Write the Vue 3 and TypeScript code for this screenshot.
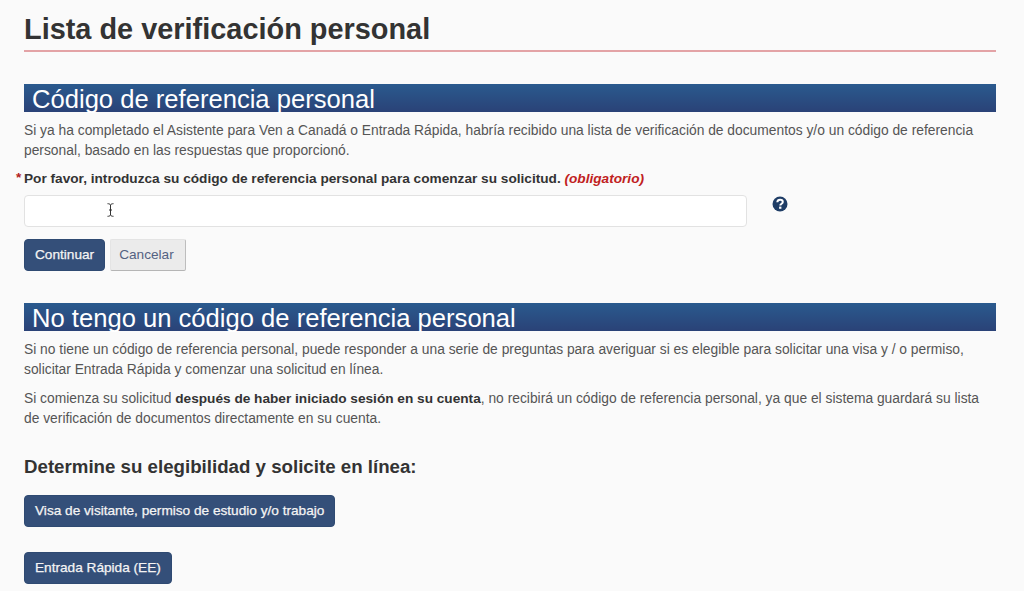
<script setup lang="ts">
const eligibilityButtons: string[] = ['Visa de visitante, permiso de estudio y/o trabajo', 'Entrada Rápida (EE)']
</script>

<template>
  <main class="page">
    <h1 class="title">Lista de verificación personal</h1>

    <section class="first">
      <h2 class="band">Código de referencia personal</h2>
      <p class="text">Si ya ha completado el Asistente para Ven a Canadá o Entrada Rápida, habría recibido una lista de verificación de documentos y/o un código de referencia personal, basado en las respuestas que proporcionó.</p>
      <label class="label" for="code"><span class="star">*</span>Por favor, introduzca su código de referencia personal para comenzar su solicitud. <em>(obligatorio)</em></label>
      <div class="field-row">
        <div class="input-wrap">
          <input id="code" class="input" type="text" />
          <svg class="cursor" width="7" height="14" viewBox="0 0 7 14" aria-hidden="true">
            <path d="M.5 .7C2 .7 3 1 3.5 2 4 1 5 .7 6.500 .7M3.500 2V12M.5 13.300C2 13.300 3 13 3.500 12 4 13 5 13.300 6.500 13.300M2 7H5" fill="none" stroke="#333" stroke-width="1" />
          </svg>
        </div>
        <svg class="help" width="16" height="16" viewBox="0 0 16 16" aria-label="Ayuda">
          <circle cx="8" cy="8" r="7.500" fill="#1f3d66" />
          <path d="M5.300 6.200C5.400 4.600 6.500 3.700 8.100 3.700 9.700 3.700 10.800 4.600 10.800 5.900 10.800 7 10.100 7.500 9.300 8 8.600 8.500 8.300 8.800 8.300 9.600" fill="none" stroke="#fff" stroke-width="2" />
          <rect x="7.100" y="10.600" width="2.300" height="2.200" fill="#fff" />
        </svg>
      </div>
      <div class="actions">
        <button class="btn primary" type="button">Continuar</button>
        <button class="btn secondary" type="button">Cancelar</button>
      </div>
    </section>

    <section class="second">
      <h2 class="band">No tengo un código de referencia personal</h2>
      <p class="text">Si no tiene un código de referencia personal, puede responder a una serie de preguntas para averiguar si es elegible para solicitar una visa y / o permiso, solicitar Entrada Rápida y comenzar una solicitud en línea.</p>
      <p class="text next">Si comienza su solicitud <strong>después de haber iniciado sesión en su cuenta</strong>, no recibirá un código de referencia personal, ya que el sistema guardará su lista de verificación de documentos directamente en su cuenta.</p>
      <h3 class="subhead">Determine su elegibilidad y solicite en línea:</h3>
      <div class="stack">
        <button v-for="label in eligibilityButtons" :key="label" class="btn primary" type="button">{{ label }}</button>
      </div>
    </section>
  </main>
</template>

<style>
html, body { margin: 0; background: #fafafa; overflow: hidden; }
</style>

<style scoped>
.page {
  box-sizing: border-box;
  width: 1024px;
  height: 591px;
  padding: 12px 28px 0 24px;
  overflow: hidden;
  background: #fafafa;
  color: #555;
  font-family: "Liberation Sans", Arial, sans-serif;
}
.title {
  margin: 0;
  padding-bottom: 4px;
  border-bottom: 2px solid #e3a3a6;
  font-size: 28.900px;
  line-height: 34px;
  font-weight: 700;
  color: #333;
}
.first { margin-top: 32px; }
.second { margin-top: 32px; }
.band {
  margin: 0;
  height: 28px;
  padding-left: 8px;
  background: linear-gradient(#2a5a8e, #2a4277);
  color: #fff;
  font-size: 25.600px;
  line-height: 30px;
  font-weight: 400;
  white-space: nowrap;
}
.text {
  margin: 8px 0 0;
  font-size: 13.820px;
  line-height: 20px;
}
.text strong { color: #333; font-size: 13.650px; line-height: 1; }
.next { margin-top: 9px; }
.label {
  position: relative;
  display: block;
  margin-top: 9px;
  font-size: 13.650px;
  line-height: 20px;
  font-weight: 700;
  color: #333;
}
.star {
  position: absolute;
  left: -8px;
  top: -1px;
  color: #b22222;
}
.label em { color: #c02020; }
.field-row {
  display: flex;
  align-items: flex-start;
  gap: 25px;
  margin-top: 6px;
}
.input-wrap { position: relative; width: 723px; height: 32px; }
.input {
  box-sizing: border-box;
  display: block;
  width: 100%;
  height: 100%;
  border: 1px solid #e2e2e2;
  border-radius: 4px;
  background: #fff;
}
.cursor { position: absolute; left: 83px; top: 8px; }
.help { margin-top: 1px; }
.actions { display: flex; gap: 5px; margin-top: 12px; }
.btn {
  box-sizing: border-box;
  height: 32px;
  padding: 0 10px;
  border-radius: 4px;
  font: 400 13.650px/30px "Liberation Sans", Arial, sans-serif;
  white-space: nowrap;
}
.primary {
  border: 1px solid #2f4a72;
  background: #344f79;
  color: #f4f4f4;
  -webkit-text-stroke: 0.25px #f4f4f4;
}
.secondary {
  border: 1px solid #e4e4e4;
  border-right-color: #bdbdbd;
  border-bottom-color: #b5b5b5;
  border-radius: 2px;
  padding: 0 11px 0 8px;
  background: #ebebeb;
  color: #546282;
}
.subhead {
  margin: 27px 0 0;
  font-size: 18.700px;
  line-height: 24px;
  font-weight: 700;
  color: #333;
}
.stack {
  display: flex;
  flex-direction: column;
  align-items: flex-start;
  gap: 25px;
  margin-top: 16px;
}
</style>
